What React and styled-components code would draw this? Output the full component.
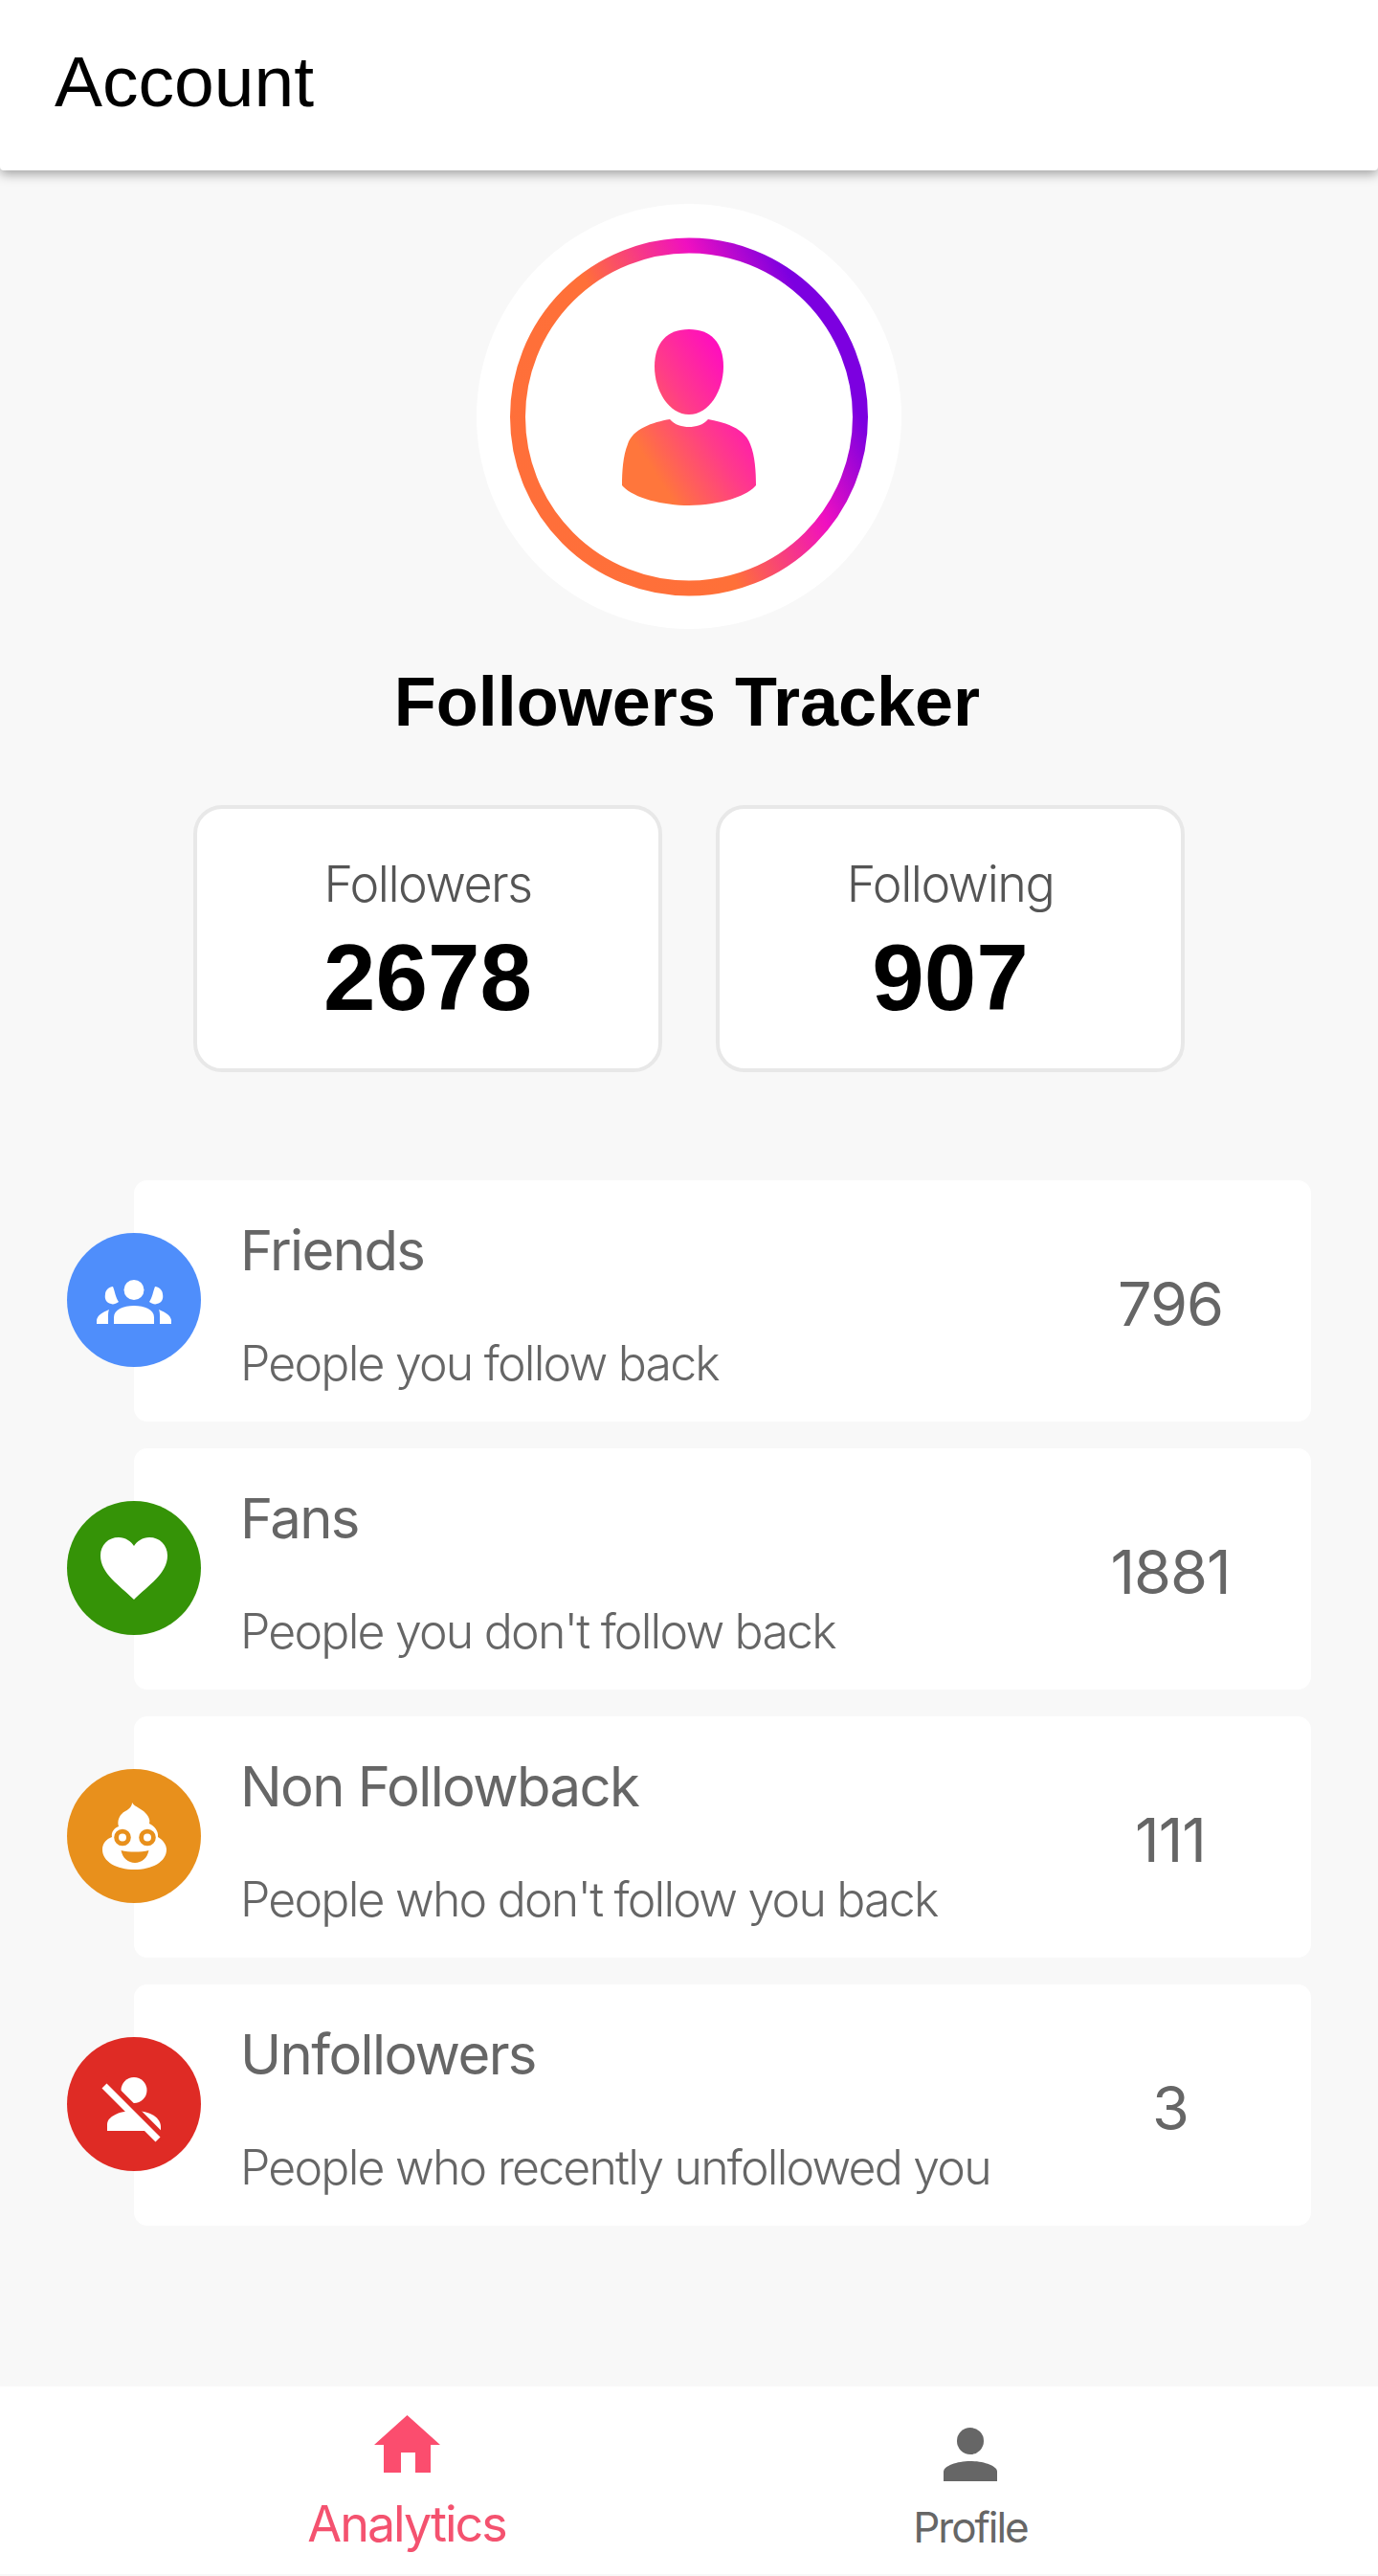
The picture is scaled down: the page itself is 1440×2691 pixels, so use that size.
import React from 'react';
import styled, { createGlobalStyle } from 'styled-components';

const GlobalStyle = createGlobalStyle`
  body {
    margin: 0;
    background: #f8f8f8;
    font-family: "Liberation Sans", Arial, sans-serif;
  }
`;

const Page = styled.div`
  min-height: 2691px;
  display: flex;
  flex-direction: column;
  padding-bottom: 2px;
  box-sizing: border-box;
  background: #f8f8f8;
`;

const Header = styled.header`
  height: 178px;
  flex-shrink: 0;
  display: flex;
  align-items: center;
  padding: 0 0 8px 57px;
  box-sizing: border-box;
  background: #fff;
  box-shadow: 0 4px 12px rgba(0, 0, 0, 0.35);
  border-bottom-right-radius: 4px;
  border-bottom-left-radius: 4px;
  font-size: 75px;
  color: #000;
`;

const Avatar = styled.div`
  width: 444px;
  height: 444px;
  margin: 35px auto 0;
  border-radius: 50%;
  background: #fff;
  display: flex;
  align-items: center;
  justify-content: center;
`;

const AppTitle = styled.h1`
  margin: 36px 0 0;
  padding-right: 4px;
  text-align: center;
  font-size: 72px;
  line-height: 80px;
  font-weight: 700;
  color: #000;
`;

const Stats = styled.div`
  display: flex;
  justify-content: center;
  gap: 56px;
  margin-top: 68px;
`;

const StatCard = styled.div`
  width: 490px;
  height: 279px;
  box-sizing: border-box;
  border: 4px solid #e8e8e8;
  border-radius: 30px;
  background: #fff;
  text-align: center;
  padding-top: 47px;
`;

const StatLabel = styled.div`
  font-family: Inter, sans-serif;
  font-weight: 300;
  font-size: 52px;
  line-height: 64px;
  letter-spacing: -1.5px;
  color: #555;
`;

const StatValue = styled.div`
  font-weight: 700;
  font-size: 98px;
  line-height: 100px;
  margin-top: 15px;
  color: #000;
`;

const List = styled.div`
  display: flex;
  flex-direction: column;
  gap: 28px;
  margin-top: 113px;
  padding: 0 70px;
`;

const Row = styled.div`
  display: flex;
  align-items: center;
`;

const RowIcon = styled.div`
  width: 140px;
  height: 140px;
  flex-shrink: 0;
  margin: 0 -70px 2px 0;
  z-index: 1;
  border-radius: 50%;
  background: ${(p) => p.$color};
  color: #fff;
  display: flex;
  align-items: center;
  justify-content: center;
`;

const RowCard = styled.div`
  flex: 1;
  height: 252px;
  box-sizing: border-box;
  display: flex;
  align-items: center;
  justify-content: space-between;
  padding: 0 72px 0 111px;
  border-radius: 14px;
  background: #fff;
`;

const RowText = styled.div`
  display: flex;
  flex-direction: column;
  gap: 53px;
  padding-top: 7px;
`;

const RowTitle = styled.div`
  font-family: Inter, sans-serif;
  font-size: 58px;
  line-height: 70px;
  letter-spacing: -1.6px;
  color: #666;
`;

const RowSub = styled.div`
  font-family: Inter, sans-serif;
  font-weight: 300;
  font-size: 50px;
  line-height: 60px;
  letter-spacing: -1.8px;
  color: #666;
`;

const RowValue = styled.div`
  width: 150px;
  padding-top: 6px;
  text-align: center;
  font-family: Inter, sans-serif;
  font-size: 63px;
  letter-spacing: -1px;
  color: #666;
`;

const TabBar = styled.nav`
  margin-top: auto;
  height: 196px;
  box-sizing: border-box;
  display: grid;
  grid-template-columns: 1fr 1fr;
  padding: 0 130px;
  background: #fff;
`;

const Tab = styled.div`
  display: flex;
  flex-direction: column;
  align-items: center;
  justify-content: flex-end;
  padding-right: ${(p) => p.$right || 0}px;
  padding-bottom: ${(p) => p.$bottom}px;
  gap: ${(p) => p.$gap}px;
`;

const TabLabel = styled.div`
  font-family: Inter, sans-serif;
  font-weight: 400;
  font-size: ${(p) => p.$size}px;
  line-height: 60px;
  letter-spacing: -2px;
  color: ${(p) => p.$color};
`;

const BRAND_ORANGE = '#E8901C';
const RED = '#DF2B25';

const AvatarArt = () => (
  <svg width="374" height="375" viewBox="0 0 374 375">
    <defs>
      <linearGradient id="ring" gradientUnits="userSpaceOnUse" x1="20" y1="280" x2="354" y2="113">
        <stop offset="0" stopColor="#ff6f3a" />
        <stop offset="0.42" stopColor="#ff7038" />
        <stop offset="0.72" stopColor="#f010c0" />
        <stop offset="0.94" stopColor="#7c00e0" />
      </linearGradient>
      <linearGradient id="person" gradientUnits="userSpaceOnUse" x1="117" y1="270" x2="257" y2="180">
        <stop offset="0.25" stopColor="#ff763c" />
        <stop offset="0.65" stopColor="#ff3c88" />
        <stop offset="1" stopColor="#ff10bc" />
      </linearGradient>
    </defs>
    <circle cx="187" cy="187.5" r="179" fill="none" stroke="url(#ring)" strokeWidth="16" />
    <path
      fill="url(#person)"
      d="M187 96C210 96 223 110 223 135C223 160 208 185 187 185C166 185 151 160 151 135C151 110 164 96 187 96Z"
    />
    <path
      fill="url(#person)"
      d="M167 190C172 196 180 198 187 198C194 198 202 196 207 190C225 193 246 200 251 216C256 228 257 245 257 259C246 272 215 280 187 280C159 280 128 272 117 259C117 245 118 228 123 216C128 200 149 193 167 190Z"
    />
  </svg>
);

const GroupIcon = () => (
  <svg width="78" height="50" viewBox="0 -4 78 50" fill="currentColor">
    <circle cx="39" cy="10.5" r="10.5" />
    <path d="M18 46V39C18 31 28 27 39 27C50 27 60 31 60 39V46Z" />
    <path d="M17 7C19 12 20 19 23 23C20 25 17 26 15 25C10 24 8 20 9 15C9 11 13 7 17 7Z" />
    <path d="M0 46V42C1 37 6 34 13 31C12 33 12 36 12 39V46Z" />
    <g transform="matrix(-1 0 0 1 78 0)">
      <path d="M17 7C19 12 20 19 23 23C20 25 17 26 15 25C10 24 8 20 9 15C9 11 13 7 17 7Z" />
      <path d="M0 46V42C1 37 6 34 13 31C12 33 12 36 12 39V46Z" />
    </g>
  </svg>
);

const HeartIcon = () => (
  <svg width="70" height="65" viewBox="0 0 70 65" fill="currentColor">
    <path d="M35 65C20 50 0 38 0 19C0 8 8 0 19 0C26 0 32 4 35 9C38 4 44 0 51 0C62 0 70 8 70 19C70 38 50 50 35 65Z" />
  </svg>
);

const PoopIcon = () => (
  <svg width="67" height="70" viewBox="0 0 67 70">
    <path
      fill="#fff"
      d="M31 0C34 5 41 6 45 11C49 15 50 19 49 22C54 24 59 30 58 36C63 39 67 44 67 49C67 62 52 70 33.5 70C15 70 0 62 0 49C0 43 4 38 10 36C9 31 12 27 17 25C15 19 18 12 24 9C28 7 31 4 31 0Z"
    />
    <circle cx="21" cy="36.5" r="6.4" fill="#fff" stroke={BRAND_ORANGE} strokeWidth="4.8" />
    <circle cx="47" cy="36.5" r="6.4" fill="#fff" stroke={BRAND_ORANGE} strokeWidth="4.8" />
    <path fill={BRAND_ORANGE} d="M19.5 50C28 52 40 52 48.5 50C47 58 41 63 34 63C27 63 21 58 19.5 50Z" />
  </svg>
);

const UnfollowIcon = () => (
  <svg width="60" height="74" viewBox="2 -9 60 74" overflow="visible">
    <circle cx="32" cy="13.5" r="13.5" fill="#fff" />
    <path fill="#fff" d="M4 56V49C4 42 15 35 32 35C49 35 60 42 60 52V56Z" />
    <line x1="1" y1="2.65" x2="62" y2="63.65" stroke={RED} strokeWidth="9" />
    <line x1="1" y1="9" x2="57" y2="65" stroke="#fff" strokeWidth="7" />
  </svg>
);

const HomeIcon = () => (
  <svg width="69" height="60" viewBox="0 0 69 60" fill="#fb4d6e">
    <path d="M34.5 0L69 31H59V60H43V39H28V60H10V31H0Z" />
  </svg>
);

const ProfileIcon = () => (
  <svg width="56" height="56" viewBox="0 0 56 56" fill="#666">
    <ellipse cx="28" cy="14" rx="14" ry="14" />
    <path d="M0 56V46C0 40 14 35 28 35C42 35 56 40 56 46V56Z" />
  </svg>
);

const rows = [
  { title: 'Friends', sub: 'People you follow back', value: '796', color: '#4F8EFB', icon: <GroupIcon /> },
  { title: 'Fans', sub: "People you don't follow back", value: '1881', color: '#359307', icon: <HeartIcon /> },
  { title: 'Non Followback', sub: "People who don't follow you back", value: '111', color: BRAND_ORANGE, icon: <PoopIcon /> },
  { title: 'Unfollowers', sub: 'People who recently unfollowed you', value: '3', color: RED, icon: <UnfollowIcon /> },
];

export default function App() {
  return (
    <Page>
      <GlobalStyle />
      <Header>Account</Header>
      <Avatar>
        <AvatarArt />
      </Avatar>
      <AppTitle>Followers Tracker</AppTitle>
      <Stats>
        <StatCard>
          <StatLabel>Followers</StatLabel>
          <StatValue>2678</StatValue>
        </StatCard>
        <StatCard>
          <StatLabel>Following</StatLabel>
          <StatValue>907</StatValue>
        </StatCard>
      </Stats>
      <List>
        {rows.map((row) => (
          <Row key={row.title}>
            <RowIcon $color={row.color}>{row.icon}</RowIcon>
            <RowCard>
              <RowText>
                <RowTitle>{row.title}</RowTitle>
                <RowSub>{row.sub}</RowSub>
              </RowText>
              <RowValue>{row.value}</RowValue>
            </RowCard>
          </Row>
        ))}
      </List>
      <TabBar>
        <Tab $gap={24} $bottom={22}>
          <HomeIcon />
          <TabLabel $size={52} $color="#f4526f">Analytics</TabLabel>
        </Tab>
        <Tab $gap={18} $bottom={19} $right={2}>
          <ProfileIcon />
          <TabLabel $size={44} $color="#666">Profile</TabLabel>
        </Tab>
      </TabBar>
    </Page>
  );
}
